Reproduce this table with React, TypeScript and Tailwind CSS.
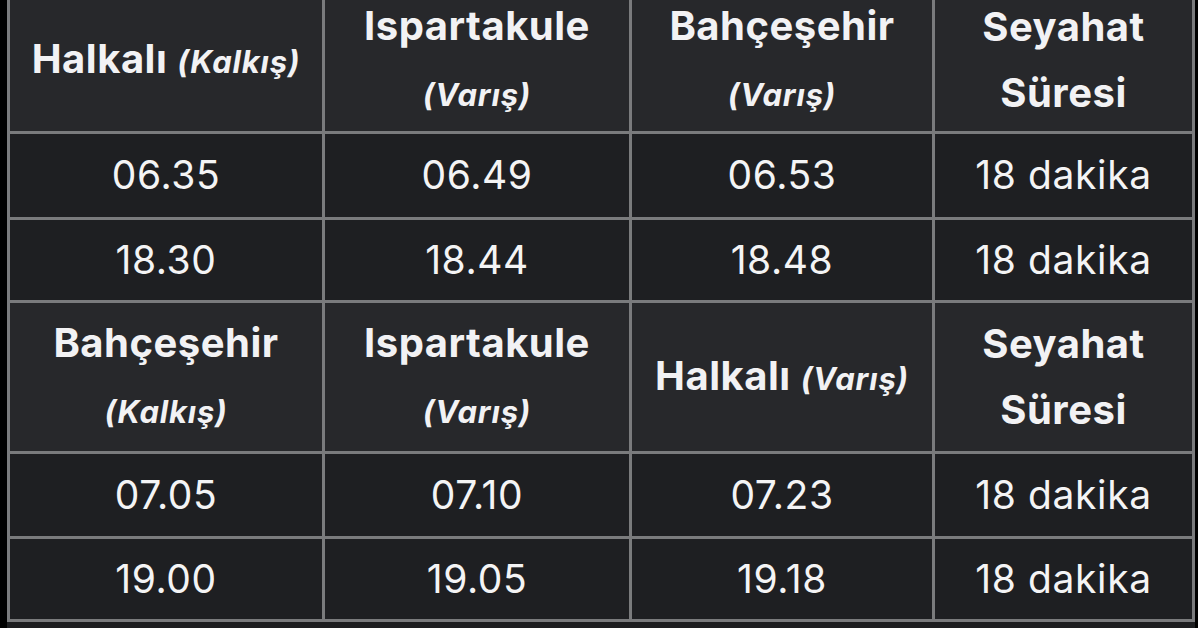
const head1 = [
  { main: "Halkalı", sub: "(Kalkış)", inline: true },
  { main: "Ispartakule", sub: "(Varış)" },
  { main: "Bahçeşehir", sub: "(Varış)" },
  { main: "Seyahat Süresi" },
];

const head2 = [
  { main: "Bahçeşehir", sub: "(Kalkış)" },
  { main: "Ispartakule", sub: "(Varış)" },
  { main: "Halkalı", sub: "(Varış)", inline: true },
  { main: "Seyahat Süresi" },
];

const rows1 = [
  ["06.35", "06.49", "06.53", "18 dakika"],
  ["18.30", "18.44", "18.48", "18 dakika"],
];

const rows2 = [
  ["07.05", "07.10", "07.23", "18 dakika"],
  ["19.00", "19.05", "19.18", "18 dakika"],
];

type Head = { main: string; sub?: string; inline?: boolean };

const HeadCell = ({ cell }: { cell: Head }) => (
  <div className="bg-[#27282b] flex items-center justify-center text-center px-2">
    <p className="text-[40px] leading-[66px] font-bold tracking-[0.5px] text-[#f2f2f4]">
      {cell.main}
      {cell.sub && (
        <>
          {cell.inline ? " " : <br />}
          <span className="text-[31px] italic tracking-[0.8px]">{cell.sub}</span>
        </>
      )}
    </p>
  </div>
);

const DataCell = ({ value }: { value: string }) => (
  <div className="bg-[#1e1f22] flex items-center justify-center text-[39px] tracking-[0.6px] text-[#f4f4f5]">
    {value}
  </div>
);

export default function App() {
  return (
    <div
      className="w-[1198px] h-[628px] overflow-hidden bg-black"
      style={{ fontFamily: "Inter, 'Noto Sans', sans-serif" }}
    >
      <div className="ml-[7px] mt-[-14px] w-[1188px] h-[660px] bg-[#1d1e20]">
        <div className="grid grid-cols-[312px_304px_300px_257px] grid-rows-[142px_83px_80px_148px_82px_80px] gap-[3px] p-[3px] bg-[#7a7b7d]">
          {head1.map((c, i) => (
            <HeadCell key={"h1" + i} cell={c} />
          ))}
          {rows1.map((r, i) =>
            r.map((v, j) => <DataCell key={"a" + i + j} value={v} />)
          )}
          {head2.map((c, i) => (
            <HeadCell key={"h2" + i} cell={c} />
          ))}
          {rows2.map((r, i) =>
            r.map((v, j) => <DataCell key={"b" + i + j} value={v} />)
          )}
        </div>
      </div>
    </div>
  );
}
